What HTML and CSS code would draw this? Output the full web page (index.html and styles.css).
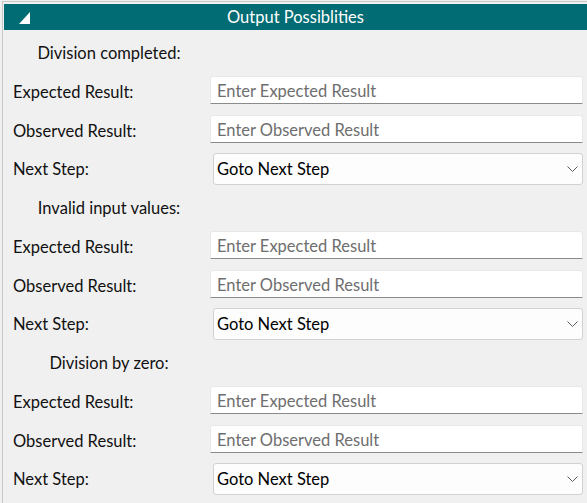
FILE: index.html
```html
<!DOCTYPE html>
<html lang="en">
<head>
<meta charset="utf-8">
<title>Output Possiblities</title>
<link rel="stylesheet" href="styles.css">
</head>
<body>
<div class="frame">
  <div class="header">
    <svg class="tri" width="11" height="12" viewBox="0 0 11 12"><polygon points="11,0 11,12 0,12" fill="#ffffff"/></svg>
    <span class="title">Output Possiblities</span>
  </div>

  <section class="group">
    <div class="heading">Division completed:</div>
    <div class="row r-in"><label class="lbl">Expected Result:</label><input class="txt" placeholder="Enter Expected Result"></div>
    <div class="row r-in"><label class="lbl">Observed Result:</label><input class="txt" placeholder="Enter Observed Result"></div>
    <div class="row r-sel"><label class="lbl">Next Step:</label>
      <div class="sel"><select><option>Goto Next Step</option></select>
        <svg class="chev" width="11" height="6" viewBox="0 0 11 6"><polyline points="0.5,0.5 5.5,5.5 10.5,0.5" fill="none" stroke="#5a5a5a" stroke-width="1"/></svg></div>
    </div>
  </section>

  <section class="group">
    <div class="heading">Invalid input values:</div>
    <div class="row r-in"><label class="lbl">Expected Result:</label><input class="txt" placeholder="Enter Expected Result"></div>
    <div class="row r-in"><label class="lbl">Observed Result:</label><input class="txt" placeholder="Enter Observed Result"></div>
    <div class="row r-sel"><label class="lbl">Next Step:</label>
      <div class="sel"><select><option>Goto Next Step</option></select>
        <svg class="chev" width="11" height="6" viewBox="0 0 11 6"><polyline points="0.5,0.5 5.5,5.5 10.5,0.5" fill="none" stroke="#5a5a5a" stroke-width="1"/></svg></div>
    </div>
  </section>

  <section class="group">
    <div class="heading">Division by zero:</div>
    <div class="row r-in"><label class="lbl">Expected Result:</label><input class="txt" placeholder="Enter Expected Result"></div>
    <div class="row r-in"><label class="lbl">Observed Result:</label><input class="txt" placeholder="Enter Observed Result"></div>
    <div class="row r-sel"><label class="lbl">Next Step:</label>
      <div class="sel"><select><option>Goto Next Step</option></select>
        <svg class="chev" width="11" height="6" viewBox="0 0 11 6"><polyline points="0.5,0.5 5.5,5.5 10.5,0.5" fill="none" stroke="#5a5a5a" stroke-width="1"/></svg></div>
    </div>
  </section>
</div>
</body>
</html>
```

FILE: styles.css
```css
html, body {
  margin: 0;
  padding: 0;
  background: #f0f0f0;
  overflow: hidden;
}
body {
  font-family: "Lato", "Noto Sans", sans-serif;
  font-size: 16.5px;
  color: #111111;
}
.frame {
  margin: 1px 0 0 2px;
  border-top: 1px solid #c9c9c9;
  border-left: 1px solid #c9c9c9;
  padding: 2px 0 0 1px;
  width: 590px;
  height: 520px;
  box-sizing: border-box;
}
.header {
  height: 26px;
  background: #016c73;
  display: flex;
  align-items: center;
  position: relative;
  color: #ffffff;
}
.tri {
  margin-left: 15px;
  margin-top: 1px;
}
.title {
  position: absolute;
  left: 0;
  width: 583px;
  text-align: center;
  font-size: 16.5px;
  top: 3px;
}
.group {
  display: flex;
  flex-direction: column;
}
.heading {
  height: 46px;
  width: 210px;
  display: flex;
  align-items: center;
  justify-content: center;
  padding-bottom: 1px;
  box-sizing: border-box;
}
.row {
  display: flex;
  align-items: center;
}
.r-in { height: 28px; }
.r-in + .r-in { margin-top: 11px; }
.r-in .lbl { padding-top: 3px; }
.r-sel { height: 32px; margin-top: 10px; }
.lbl {
  width: 206px;
  padding-left: 9px;
  box-sizing: border-box;
  flex: none;
}
.txt {
  width: 373px;
  height: 28px;
  box-sizing: border-box;
  border: 1px solid #e8e8e8;
  border-bottom: 1px solid #8b8b8b;
  border-radius: 3px 3px 0 0;
  background: #ffffff;
  padding: 2px 6px 0 6px;
  font-family: inherit;
  font-size: 16.5px;
  color: #111;
  outline: none;
}
.txt::placeholder {
  color: #6e6e6e;
  opacity: 1;
}
.sel {
  position: relative;
  margin-left: 3px;
  width: 370px;
  height: 32px;
}
.sel select {
  appearance: none;
  -webkit-appearance: none;
  width: 100%;
  height: 100%;
  box-sizing: border-box;
  border: 1px solid #d2d2d2;
  border-radius: 3px;
  background: #fdfdfd;
  padding: 0 3px;
  font-family: inherit;
  font-size: 16.5px;
  color: #000;
  outline: none;
}
.chev {
  position: absolute;
  right: 5px;
  top: 13px;
  pointer-events: none;
}
```
